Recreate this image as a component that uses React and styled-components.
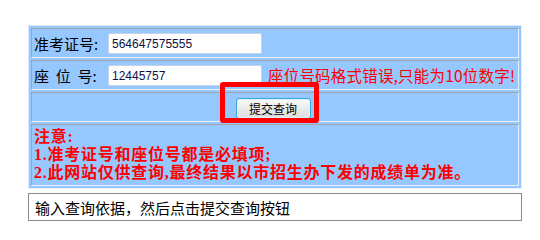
import styled, { createGlobalStyle } from 'styled-components';

const GlobalStyle = createGlobalStyle`
  html, body {
    margin: 0;
    padding: 0;
    background: #ffffff;
  }
  body {
    font-family: 'Noto Sans CJK SC', 'Liberation Sans', sans-serif;
  }
`;

const Page = styled.div`
  width: 540px;
  height: 240px;
  padding: 25px 0 0 28px;
  box-sizing: border-box;
`;

const Table = styled.table`
  width: 494px;
  table-layout: fixed;
  border-collapse: separate;
  border-spacing: 2px;
  background: #96c8ff;
  border: 1px solid #dce8ff;
  border-right-color: #e6eeff;
  border-bottom-color: #e6eeff;
`;

const Cell = styled.td`
  height: ${(p) => p.h || 28}px;
  padding: 0 0 0 2px;
  background: #96c8ff;
  border: 1px solid #e8f0ff;
  border-top-color: #a4a4a4;
  border-left-color: #a4a4a4;
  text-align: ${(p) => (p.center ? 'center' : 'left')};
  vertical-align: middle;
  position: relative;
`;

const Line = styled.div`
  display: flex;
  align-items: center;
  height: 28px;
`;

const Label = styled.span`
  font-family: 'Noto Sans CJK SC', sans-serif;
  font-size: 15px;
  color: #000;
  width: 74px;
  white-space: pre;
`;

const Input = styled.input`
  width: 154px;
  height: 21px;
  box-sizing: border-box;
  margin: 0;
  padding: 1px 3px 0;
  border: 1px solid #c8d4e4;
  border-radius: 2px;
  background: #fff;
  font-family: 'Liberation Sans', Arial, sans-serif;
  font-size: 12px;
  color: #101040;
  outline: none;
`;

const Error = styled.span`
  margin-left: 6px;
  font-family: 'Noto Sans CJK SC', sans-serif;
  font-size: 15.5px;
  letter-spacing: 0.2px;
  color: #ff0000;
  white-space: nowrap;
`;

const SubmitButton = styled.button`
  width: 75px;
  height: 21px;
  margin: 0 6px 0 0;
  padding: 0;
  font-family: 'Noto Sans CJK SC', sans-serif;
  font-size: 12px;
  color: #000;
  border: 1px solid #3aa9d6;
  border-radius: 3px;
  background: linear-gradient(#fafafa, #dcdcdc);
  box-shadow: inset 0 0 0 1px #d8f2ff;
`;

const Highlight = styled.div`
  position: absolute;
  left: 188px;
  top: -11px;
  width: 99px;
  height: 41px;
  box-sizing: border-box;
  border: 5px solid #ff0000;
  border-radius: 3px;
  pointer-events: none;
`;

const Notice = styled.div`
  padding: 2px 0 3px 0;
`;

const NoticeLine = styled.div`
  height: 18px;
  line-height: 18px;
  font-family: 'Liberation Serif', 'Noto Sans CJK SC', serif;
  font-size: 16px;
  font-weight: 700;
  letter-spacing: 0.75px;
  color: #ff0000;
  white-space: nowrap;
`;

const Hint = styled.div`
  width: 494px;
  height: 28px;
  margin-top: 4px;
  box-sizing: border-box;
  border: 1px solid #8a8a8a;
  padding-left: 6px;
  display: flex;
  align-items: center;
  font-family: 'Noto Sans CJK SC', sans-serif;
  font-size: 15px;
  color: #000;
`;

export default function App() {
  return (
    <Page>
      <GlobalStyle />
      <Table>
        <tbody>
          <tr>
            <Cell>
              <Line>
                <Label>准考证号:</Label>
                <Input defaultValue="564647575555" />
              </Line>
            </Cell>
          </tr>
          <tr>
            <Cell>
              <Line>
                <Label>{'座  位  号:'}</Label>
                <Input defaultValue="12445757" />
                <Error>座位号码格式错误,只能为10位数字!</Error>
              </Line>
            </Cell>
          </tr>
          <tr>
            <Cell center>
              <SubmitButton>提交查询</SubmitButton>
              <Highlight />
            </Cell>
          </tr>
          <tr>
            <Cell h={60}>
              <Notice>
                <NoticeLine>注意:</NoticeLine>
                <NoticeLine>1.准考证号和座位号都是必填项;</NoticeLine>
                <NoticeLine>2.此网站仅供查询,最终结果以市招生办下发的成绩单为准。</NoticeLine>
              </Notice>
            </Cell>
          </tr>
        </tbody>
      </Table>
      <Hint>输入查询依据，然后点击提交查询按钮</Hint>
    </Page>
  );
}
